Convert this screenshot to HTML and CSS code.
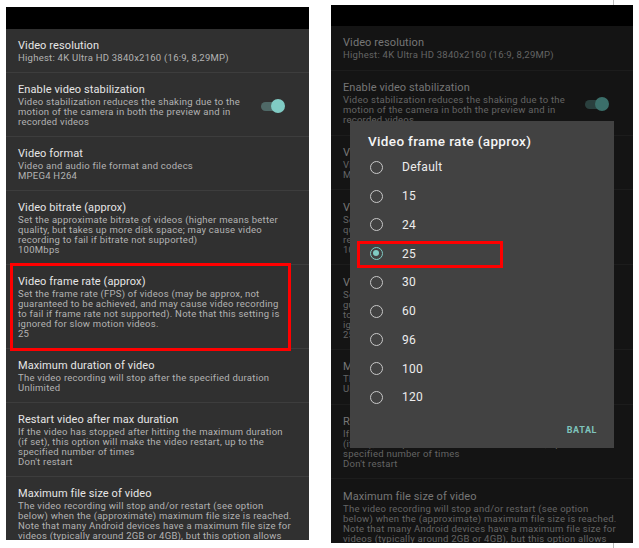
FILE: index.html
```html
<!DOCTYPE html>
<html>
<head>
<meta charset="utf-8">
<link rel="stylesheet" href="styles.css">
</head>
<body>
<div class="page">
  <section class="phone phone-left">
    <div class="statusbar"></div>
    <div class="list">
      <div class="item">
        <div class="text">
          <div class="title">Video resolution</div>
          <div class="sub">Highest: 4K Ultra HD 3840x2160 (16:9, 8,29MP)</div>
        </div>
      </div>
      <div class="item">
        <div class="text">
          <div class="title">Enable video stabilization</div>
          <div class="sub">Video stabilization reduces the shaking due to the<br>motion of the camera in both the preview and in<br>recorded videos</div>
        </div>
        <div class="switch"><span class="track"></span><span class="thumb"></span></div>
      </div>
      <div class="item">
        <div class="text">
          <div class="title">Video format</div>
          <div class="sub">Video and audio file format and codecs<br>MPEG4 H264</div>
        </div>
      </div>
      <div class="item">
        <div class="text">
          <div class="title">Video bitrate (approx)</div>
          <div class="sub">Set the approximate bitrate of videos (higher means better<br>quality, but takes up more disk space; may cause video<br>recording to fail if bitrate not supported)<br>100Mbps</div>
        </div>
      </div>
      <div class="item">
        <div class="text">
          <div class="title">Video frame rate (approx)</div>
          <div class="sub">Set the frame rate (FPS) of videos (may be approx, not<br>guaranteed to be achieved, and may cause video recording<br>to fail if frame rate not supported). Note that this setting is<br>ignored for slow motion videos.<br>25</div>
        </div>
      </div>
      <div class="item">
        <div class="text">
          <div class="title">Maximum duration of video</div>
          <div class="sub">The video recording will stop after the specified duration<br>Unlimited</div>
        </div>
      </div>
      <div class="item">
        <div class="text">
          <div class="title">Restart video after max duration</div>
          <div class="sub">If the video has stopped after hitting the maximum duration<br>(if set), this option will make the video restart, up to the<br>specified number of times<br>Don't restart</div>
        </div>
      </div>
      <div class="item">
        <div class="text">
          <div class="title">Maximum file size of video</div>
          <div class="sub">The video recording will stop and/or restart (see option<br>below) when the (approximate) maximum file size is reached.<br>Note that many Android devices have a maximum file size for<br>videos (typically around 2GB or 4GB), but this option allows</div>
        </div>
      </div>
    </div>
    <div class="mark mark-left"></div>
  </section>

  <section class="phone phone-right">
    <div class="statusbar"></div>
    <div class="list dim">
      <div class="item">
        <div class="text">
          <div class="title">Video resolution</div>
          <div class="sub">Highest: 4K Ultra HD 3840x2160 (16:9, 8,29MP)</div>
        </div>
      </div>
      <div class="item">
        <div class="text">
          <div class="title">Enable video stabilization</div>
          <div class="sub">Video stabilization reduces the shaking due to the<br>motion of the camera in both the preview and in<br>recorded videos</div>
        </div>
        <div class="switch"><span class="track"></span><span class="thumb"></span></div>
      </div>
      <div class="item">
        <div class="text">
          <div class="title">Video format</div>
          <div class="sub">Video and audio file format and codecs<br>MPEG4 H264</div>
        </div>
      </div>
      <div class="item">
        <div class="text">
          <div class="title">Video bitrate (approx)</div>
          <div class="sub">Set the approximate bitrate of videos (higher means better<br>quality, but takes up more disk space; may cause video<br>recording to fail if bitrate not supported)<br>100Mbps</div>
        </div>
      </div>
      <div class="item">
        <div class="text">
          <div class="title">Video frame rate (approx)</div>
          <div class="sub">Set the frame rate (FPS) of videos (may be approx, not<br>guaranteed to be achieved, and may cause video recording<br>to fail if frame rate not supported). Note that this setting is<br>ignored for slow motion videos.<br>25</div>
        </div>
      </div>
      <div class="item">
        <div class="text">
          <div class="title">Maximum duration of video</div>
          <div class="sub">The video recording will stop after the specified duration<br>Unlimited</div>
        </div>
      </div>
      <div class="item">
        <div class="text">
          <div class="title">Restart video after max duration</div>
          <div class="sub">If the video has stopped after hitting the maximum duration<br>(if set), this option will make the video restart, up to the<br>specified number of times<br>Don't restart</div>
        </div>
      </div>
      <div class="item">
        <div class="text">
          <div class="title">Maximum file size of video</div>
          <div class="sub">The video recording will stop and/or restart (see option<br>below) when the (approximate) maximum file size is reached.<br>Note that many Android devices have a maximum file size for<br>videos (typically around 2GB or 4GB), but this option allows</div>
        </div>
      </div>
    </div>

    <div class="dialog">
      <div class="dlg-title">Video frame rate (approx)</div>
      <ul class="options">
        <li class="opt"><span class="radio"></span><span class="opt-label">Default</span></li>
        <li class="opt"><span class="radio"></span><span class="opt-label">15</span></li>
        <li class="opt"><span class="radio"></span><span class="opt-label">24</span></li>
        <li class="opt opt-on"><span class="radio"></span><span class="opt-label">25</span></li>
        <li class="opt"><span class="radio"></span><span class="opt-label">30</span></li>
        <li class="opt"><span class="radio"></span><span class="opt-label">60</span></li>
        <li class="opt"><span class="radio"></span><span class="opt-label">96</span></li>
        <li class="opt"><span class="radio"></span><span class="opt-label">100</span></li>
        <li class="opt"><span class="radio"></span><span class="opt-label">120</span></li>
      </ul>
      <div class="actions"><span class="btn">BATAL</span></div>
      <div class="mark mark-right"></div>
    </div>
    <div class="tick tick-top"></div>
    <div class="tick tick-bottom"></div>
  </section>
</div>
</body>
</html>
```

FILE: styles.css
```css
html, body {
  margin: 0;
  padding: 0;
  background: #ffffff;
}

body {
  font-family: Roboto, "Noto Sans", "Liberation Sans", sans-serif;
  width: 639px;
  height: 548px;
  overflow: hidden;
}

.page {
  display: flex;
  align-items: flex-start;
  gap: 22px;
  padding-left: 6px;
}

.phone {
  position: relative;
  display: flex;
  flex-direction: column;
  overflow: visible;
}

.phone-left {
  width: 303px;
  height: 533px;
  margin-top: 7px;
  background: #303030;
}

.phone-right {
  width: 302px;
  height: 538px;
  margin-top: 5px;
  background: #141414;
}

.statusbar {
  height: 22px;
  background: #000000;
  flex: none;
}

.phone-right .statusbar {
  height: 21px;
}

.list {
  flex: 1;
  overflow: hidden;
}

.item {
  display: flex;
  align-items: center;
  padding: 11px 12px 9px 12px;
  border-bottom: 1px solid #3d3d3d;
}

.item:last-child {
  border-bottom: none;
}

.text {
  flex: 1;
  min-width: 0;
  white-space: nowrap;
}

.title {
  font-size: 11px;
  line-height: 12px;
  color: #e6e6e6;
  margin-bottom: 1px;
  letter-spacing: 0.1px;
}

.sub {
  font-size: 9.5px;
  line-height: 10px;
  color: #b3b3b3;
  letter-spacing: 0.25px;
}

.switch {
  position: relative;
  width: 26px;
  height: 14px;
  flex: none;
  margin-right: 12px;
  margin-left: -40px;
}

.track {
  position: absolute;
  left: 2px;
  top: 3px;
  width: 22px;
  height: 9px;
  border-radius: 5px;
  background: #4f6967;
}

.thumb {
  position: absolute;
  right: 0;
  top: 0;
  width: 14px;
  height: 14px;
  border-radius: 50%;
  background: #80cbc4;
}

/* dimmed list behind dialog */
.dim .item {
  padding-top: 11.4px;
  padding-bottom: 9.4px;
  border-bottom-color: #1c1c1c;
}
.dim .title {
  color: #767676;
}
.dim .sub {
  color: #646464;
}
.dim .track {
  background: #2a403e;
}
.dim .thumb {
  background: #3b6f6a;
}

/* dialog */
.dialog {
  position: absolute;
  left: 19px;
  top: 116px;
  width: 264px;
  height: 327px;
  box-sizing: border-box;
  background: #424242;
  padding: 12px 17px 8px 0;
  display: flex;
  flex-direction: column;
}

.dlg-title {
  font-size: 13.5px;
  line-height: 16px;
  font-weight: 500;
  color: #f5f5f5;
  padding-left: 18px;
  letter-spacing: 0.35px;
}

.options {
  list-style: none;
  margin: 4px 0 0 0;
  padding: 0;
}

.opt {
  display: flex;
  align-items: center;
  height: 28.75px;
  padding-left: 20px;
}

.radio {
  box-sizing: border-box;
  width: 13px;
  height: 13px;
  border: 1.6px solid #c8c8c8;
  border-radius: 50%;
  flex: none;
  position: relative;
}

.opt-on .radio {
  border-color: #80cbc4;
}

.opt-on .radio::after {
  content: "";
  position: absolute;
  left: 2px;
  top: 2px;
  width: 6px;
  height: 6px;
  border-radius: 50%;
  background: #80cbc4;
}

.opt-label {
  margin-left: 19px;
  font-size: 12px;
  line-height: 14px;
  color: #ededed;
  letter-spacing: 0.3px;
}

.actions {
  margin-top: 8px;
  display: flex;
  justify-content: flex-end;
  height: 20px;
  align-items: center;
}

.btn {
  font-size: 9px;
  font-weight: 700;
  letter-spacing: 0.6px;
  color: #7fc4bd;
}

/* red annotation boxes */
.mark {
  position: absolute;
  border: 3px solid #ff0000;
  box-sizing: border-box;
  pointer-events: none;
}

.mark-left {
  left: 4px;
  top: 256px;
  width: 281px;
  height: 88px;
}

.mark-right {
  left: 7px;
  top: 120px;
  width: 146px;
  height: 27px;
}

.tick {
  position: absolute;
  width: 1px;
  background: #bdbdbd;
  left: 282px;
}

.tick-top {
  top: -5px;
  height: 5px;
}

.tick-bottom {
  bottom: -5px;
  height: 5px;
}
```
